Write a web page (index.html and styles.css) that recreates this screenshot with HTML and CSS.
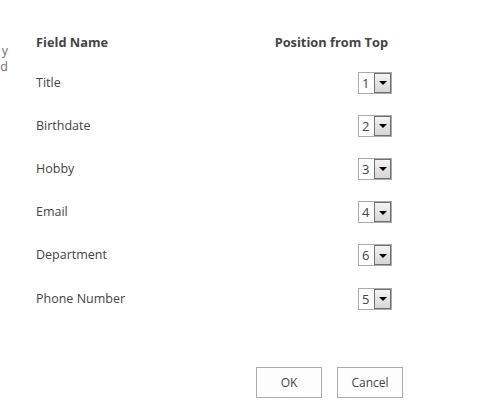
FILE: index.html
```html
<!DOCTYPE html>
<html>
<head>
<meta charset="utf-8">
<link rel="stylesheet" href="styles.css">
</head>
<body>
<div class="page">
  <div class="side">
    <span>y</span>
    <span>d</span>
  </div>
  <div class="main">
    <div class="head">
      <div class="hd">Field Name</div>
      <div class="hd">Position from Top</div>
    </div>
    <div class="grid">
      <div class="name">Title</div>
      <div class="pos"><span class="sel"><span class="val">1</span><span class="btn"><span class="arrow"></span></span></span></div>

      <div class="name">Birthdate</div>
      <div class="pos"><span class="sel"><span class="val">2</span><span class="btn"><span class="arrow"></span></span></span></div>

      <div class="name">Hobby</div>
      <div class="pos"><span class="sel"><span class="val">3</span><span class="btn"><span class="arrow"></span></span></span></div>

      <div class="name">Email</div>
      <div class="pos"><span class="sel"><span class="val">4</span><span class="btn"><span class="arrow"></span></span></span></div>

      <div class="name">Department</div>
      <div class="pos"><span class="sel"><span class="val">6</span><span class="btn"><span class="arrow"></span></span></span></div>

      <div class="name">Phone Number</div>
      <div class="pos"><span class="sel"><span class="val">5</span><span class="btn"><span class="arrow"></span></span></span></div>
    </div>
    <div class="actions">
      <button class="button">OK</button>
      <button class="button">Cancel</button>
    </div>
  </div>
</div>
</body>
</html>
```

FILE: styles.css
```css
html, body {
  margin: 0;
  padding: 0;
  background: #fff;
}
body {
  width: 495px;
  height: 419px;
  overflow: hidden;
  font-family: "Open Sans", "Noto Sans", sans-serif;
  font-size: 12.5px;
  color: #444;
}
.page {
  display: flex;
  width: 495px;
}
.side {
  width: 8px;
  flex: none;
  display: flex;
  flex-direction: column;
  align-items: flex-end;
  padding-top: 43px;
  font-size: 12.5px;
  line-height: 16px;
  color: #7a6e6e;
}
.main {
  margin-left: 28px;
  width: 355px;
  padding-top: 33px;
}
.head {
  display: flex;
  justify-content: space-between;
  height: 18px;
  margin-bottom: 10px;
  padding-right: 3px;
}
.hd {
  font-weight: bold;
  font-size: 12.8px;
  line-height: 18px;
  color: #444;
}
.grid {
  display: grid;
  grid-template-columns: 1fr auto;
  grid-auto-rows: 43.2px;
  align-items: center;
  margin-right: -1px;
}
.name {
  line-height: 18px;
}
.pos {
  display: flex;
  justify-content: flex-end;
}
.sel {
  display: flex;
  height: 22px;
  box-sizing: border-box;
  border: 1px solid #ababab;
  background: #fff;
}
.val {
  width: 15px;
  box-sizing: border-box;
  padding-left: 3px;
  line-height: 20px;
  font-size: 13px;
  color: #444;
}
.btn {
  width: 17px;
  box-sizing: border-box;
  border: 1px solid #707070;
  margin: 0;
  background: linear-gradient(#f4f4f4, #d6d6d6);
  display: flex;
  align-items: center;
  justify-content: center;
}
.arrow {
  width: 0;
  height: 0;
  border-left: 4px solid transparent;
  border-right: 4px solid transparent;
  border-top: 4px solid #000;
  margin-top: 1px;
}
.actions {
  display: flex;
  justify-content: flex-end;
  gap: 15px;
  margin-top: 47px;
  margin-right: -12px;
}
.button {
  width: 66px;
  height: 31px;
  border: 1px solid #ababab;
  background: #fdfdfd;
  font-family: "Open Sans", "Noto Sans", sans-serif;
  font-size: 12px;
  color: #444;
  padding: 0;
}
```
